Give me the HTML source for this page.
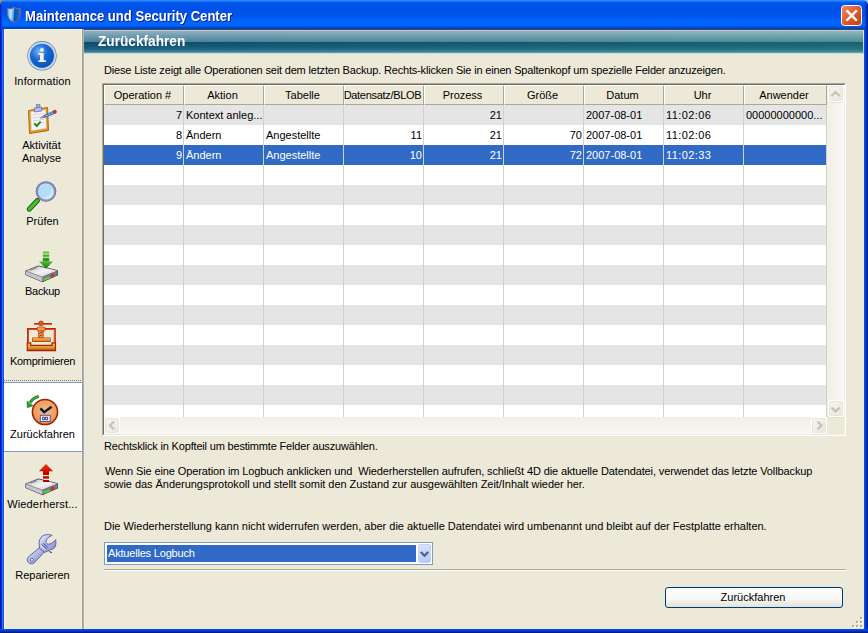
<!DOCTYPE html>
<html><head><meta charset="utf-8">
<style>
*{margin:0;padding:0;box-sizing:border-box}
html,body{width:868px;height:633px;overflow:hidden;background:linear-gradient(90deg,#a09070 50%,#a8bce8 50%)}
body{position:relative;font-family:"Liberation Sans",sans-serif;font-size:11px;color:#000}
.a{position:absolute}
.t{position:absolute;white-space:pre;line-height:13px;font-size:11px}
#title{left:0;top:0;width:868px;height:29px;border-radius:5px 5px 0 0;
 background:linear-gradient(180deg,#3d95ff 0px,#1f7dff 1px,#0a62f4 2px,#0055ea 3px,#0050e6 9px,#0054ea 15px,#0062fb 20px,#0066ff 24px,#0062fa 26px,#0050e0 27px,#0040c8 28px,#0040c8 29px)}
#frameL{left:0;top:29px;width:4px;height:604px;background:linear-gradient(90deg,#0014c4 0,#0014c4 1px,#0630dc 1px,#0630dc 2px,#2a74f4 2px,#2a74f4 3px,#0a52ea 3px,#0a52ea 4px)}
#frameR{left:864px;top:29px;width:4px;height:604px;background:linear-gradient(90deg,#0050f0 0,#0050f0 1px,#0040d8 1px,#0040d8 2px,#0030b0 2px,#0030b0 3px,#001880 3px)}
#frameB{left:0;top:629px;width:868px;height:4px;background:linear-gradient(180deg,#0848e8 0,#0848e8 1px,#0040e0 1px,#0040e0 2px,#0030b0 2px,#0030b0 3px,#001a80 3px)}
#content{left:4px;top:29px;width:860px;height:600px;background:#ece9d8}
#side{left:4px;top:29px;width:78px;height:600px;background:#ece9d8;border-top:1px solid #fff8e0;border-left:1px solid #fff8e0}
#sep{left:81px;top:29px;width:3px;height:600px;background:linear-gradient(90deg,#f4f0dc 0,#f4f0dc 1px,#a0a0a0 1px,#a0a0a0 2px,#b4b2a8 2px)}
#hdr{left:84px;top:29px;width:780px;height:25px;
 background:linear-gradient(180deg,#404850 0,#404850 1px,#c0c8cc 1px,#c0c8cc 2px,#8fb0c0 2px,#4a809c 13px,#0c4c6c 13px,#145674 17px,#206080 20px,#3a88a0 23px,#78b4c0 24px,#c0dcd8 24px,#c0dcd8 25px)}
#hdr2{left:84px;top:29px;width:780px;height:25px;-webkit-mask-image:linear-gradient(90deg,transparent,#000);
 background:linear-gradient(180deg,#404850 0,#404850 1px,#c0c8cc 1px,#c0c8cc 2px,#90b8c0 2px,#4c8c94 13px,#166270 13px,#1e6a78 17px,#2a7280 20px,#3c9098 23px,#78b8b8 24px,#c0e0d8 24px,#c0e0d8 25px)}
.hdrtxt{color:#fff;font-weight:bold;font-size:13px;}
.tb{left:25px;top:10px;color:#fff;font-weight:bold;font-size:14px;text-shadow:1px 1px 0 #0a1e88;transform:scaleX(0.934);transform-origin:0 0}
/* table */
#tbl{left:102px;top:83px;width:744px;height:353px;border:1px solid;border-color:#aca899 #fff #fff #aca899}
#tbli{left:103px;top:84px;width:742px;height:351px;border:1px solid;border-color:#716f64 #f1efe2 #f1efe2 #716f64;background:#fff}
.hc{position:absolute;top:85px;height:20px;background:#ece9d8;border-left:1px solid #fff;border-top:1px solid #fff;border-right:1px solid #aca899;border-bottom:1px solid #aca899}
.ht{position:absolute;top:89px;height:13px;line-height:13px;text-align:center;overflow:hidden;white-space:nowrap}
.row{position:absolute;left:104px;width:723px;height:20px}
.g{background:#e5e5e5}.w{background:#fff}
.s{background:#316ac5}
.vl{position:absolute;top:105px;width:1px;height:312px;background:#d0d0d0}
.ct{position:absolute;height:13px;line-height:13px;white-space:pre;overflow:hidden}
.r{text-align:right}
.sl{position:absolute;left:4px;width:77px;text-align:center;line-height:13px;height:13px;white-space:pre}
.sbo{position:absolute;width:16px;height:17px;background:#fff;border-radius:2px;box-shadow:0 1px 0 #e2e0d2}
.sbi{position:absolute;width:14px;height:15px;border-radius:2px;background:linear-gradient(135deg,#f6f5f0,#e9e7de);border:1px solid #e8e6dc}
.btn{position:absolute;border:1px solid #003c74;border-radius:3px;background:linear-gradient(180deg,#fff 0%,#f6f6f3 60%,#e3e2da 100%);text-align:center}
</style></head><body>
<div class="a" id="title"></div>
<div class="a" style="left:0;top:4px;width:1px;height:25px;background:#0020c8"></div>
<div class="a" style="left:1px;top:2px;width:1px;height:27px;background:linear-gradient(180deg,#1a5cf0,#0840dc 5px)"></div>
<div class="a" style="left:867px;top:4px;width:1px;height:25px;background:#001a80"></div>
<div class="a" style="left:866px;top:2px;width:1px;height:27px;background:linear-gradient(180deg,#1850d8,#0030b0 6px)"></div>
<div class="a" style="left:865px;top:2px;width:1px;height:27px;background:#0040d0"></div>
<div class="a" id="frameL"></div>
<div class="a" id="frameR"></div>
<div class="a" id="frameB"></div>
<div class="a" id="content"></div>
<div class="a" id="side"></div>
<div class="a" id="sep"></div>
<div class="a" id="hdr"></div><div class="a" id="hdr2"></div><div class="a" style="left:863px;top:30px;width:1px;height:24px;background:linear-gradient(180deg,#e0ecec,#a8ccc8)"></div>
<div class="a" style="left:4px;top:380px;width:78px;height:1px;background:repeating-linear-gradient(90deg,#7a7a70 0,#7a7a70 1px,transparent 1px,transparent 2px)"></div>
<div class="a" style="left:4px;top:382px;width:79px;height:70px;background:#fff;border:1px solid #7b9cc0;border-left:0;border-radius:0 2px 2px 0"></div>
<div class="sl" style="top:75px;letter-spacing:0.15px">Information</div>
<div class="sl" style="top:139px;left:3px">Aktivität</div>
<div class="sl" style="top:152px;left:3px">Analyse</div>
<div class="sl" style="top:215px">Prüfen</div>
<div class="sl" style="top:285px;letter-spacing:-0.3px">Backup</div>
<div class="sl" style="top:355px;letter-spacing:-0.27px">Komprimieren</div>
<div class="sl" style="top:428px">Zurückfahren</div>
<div class="sl" style="top:498px;letter-spacing:0.15px">Wiederherst...</div>
<div class="sl" style="top:569px">Reparieren</div>
<div class="t tb">Maintenance und Security Center</div>
<div class="t hdrtxt" style="left:97.5px;top:35px;font-size:14px;transform:scaleX(0.975);transform-origin:0 0">Zurückfahren</div>

<div class="t" style="left:104px;top:64px;letter-spacing:-0.175px">Diese Liste zeigt alle Operationen seit dem letzten Backup. Rechts-klicken Sie in einen Spaltenkopf um spezielle Felder anzuzeigen.</div>

<div class="a" id="tbl"></div><div class="a" id="tbli"></div>
<div class="hc" style="left:104px;width:80px"></div>
<div class="ht" style="left:104px;width:77px">Operation #</div>
<div class="hc" style="left:184px;width:80px"></div>
<div class="ht" style="left:184px;width:77px">Aktion</div>
<div class="hc" style="left:264px;width:80px"></div>
<div class="ht" style="left:264px;width:77px">Tabelle</div>
<div class="hc" style="left:344px;width:80px"></div>
<div class="ht" style="left:343px;width:79px;letter-spacing:-0.3px">Datensatz/BLOB</div>
<div class="hc" style="left:424px;width:80px"></div>
<div class="ht" style="left:424px;width:77px">Prozess</div>
<div class="hc" style="left:504px;width:80px"></div>
<div class="ht" style="left:504px;width:77px">Größe</div>
<div class="hc" style="left:584px;width:80px"></div>
<div class="ht" style="left:584px;width:77px">Datum</div>
<div class="hc" style="left:664px;width:80px"></div>
<div class="ht" style="left:664px;width:77px">Uhr</div>
<div class="hc" style="left:744px;width:83px"></div>
<div class="ht" style="left:744px;width:80px">Anwender</div>
<div class="row g" style="top:105px;height:20px"></div>
<div class="row w" style="top:125px;height:20px"></div>
<div class="row s" style="top:145px;height:20px"></div>
<div class="row w" style="top:165px;height:20px"></div>
<div class="row g" style="top:185px;height:20px"></div>
<div class="row w" style="top:205px;height:20px"></div>
<div class="row g" style="top:225px;height:20px"></div>
<div class="row w" style="top:245px;height:20px"></div>
<div class="row g" style="top:265px;height:20px"></div>
<div class="row w" style="top:285px;height:20px"></div>
<div class="row g" style="top:305px;height:20px"></div>
<div class="row w" style="top:325px;height:20px"></div>
<div class="row g" style="top:345px;height:20px"></div>
<div class="row w" style="top:365px;height:20px"></div>
<div class="row g" style="top:385px;height:20px"></div>
<div class="row w" style="top:405px;height:12px"></div>
<div class="vl" style="left:183px"></div>
<div class="vl" style="left:263px"></div>
<div class="vl" style="left:343px"></div>
<div class="vl" style="left:423px"></div>
<div class="vl" style="left:503px"></div>
<div class="vl" style="left:583px"></div>
<div class="vl" style="left:663px"></div>
<div class="vl" style="left:743px"></div>
<div class="vl" style="left:826px"></div>
<div class="ct r" style="left:104px;width:78px;top:109px">7</div>
<div class="ct" style="left:186px;width:77px;top:109px">Kontext anleg...</div>
<div class="ct r" style="left:424px;width:78px;top:109px">21</div>
<div class="ct" style="left:586px;width:77px;top:109px">2007-08-01</div>
<div class="ct" style="left:666px;width:77px;top:109px;letter-spacing:0.4px">11:02:06</div>
<div class="ct" style="left:746px;width:77px;top:109px">00000000000...</div>
<div class="ct r" style="left:104px;width:78px;top:129px">8</div>
<div class="ct" style="left:186px;width:77px;top:129px">Ändern</div>
<div class="ct" style="left:266px;width:77px;top:129px">Angestellte</div>
<div class="ct r" style="left:344px;width:78px;top:129px">11</div>
<div class="ct r" style="left:424px;width:78px;top:129px">21</div>
<div class="ct r" style="left:504px;width:78px;top:129px">70</div>
<div class="ct" style="left:586px;width:77px;top:129px">2007-08-01</div>
<div class="ct" style="left:666px;width:77px;top:129px;letter-spacing:0.4px">11:02:06</div>
<div class="ct r" style="left:104px;width:78px;top:149px;color:#fff">9</div>
<div class="ct" style="left:186px;width:77px;top:149px;color:#fff">Ändern</div>
<div class="ct" style="left:266px;width:77px;top:149px;color:#fff">Angestellte</div>
<div class="ct r" style="left:344px;width:78px;top:149px;color:#fff">10</div>
<div class="ct r" style="left:424px;width:78px;top:149px;color:#fff">21</div>
<div class="ct r" style="left:504px;width:78px;top:149px;color:#fff">72</div>
<div class="ct" style="left:586px;width:77px;top:149px;color:#fff">2007-08-01</div>
<div class="ct" style="left:666px;width:77px;top:149px;color:#fff;letter-spacing:0.4px">11:02:33</div>
<div class="a" style="left:827px;top:85px;width:17px;height:332px;background:linear-gradient(90deg,#f1efe7,#f5f4ee 70%,#fbfaf6)"></div>
<div class="a" style="left:104px;top:417px;width:723px;height:17px;background:linear-gradient(180deg,#f1efe7,#f5f4ee 70%,#fbfaf6)"></div>
<div class="a" style="left:827px;top:417px;width:17px;height:17px;background:#ece9d8"></div>
<div class="sbo" style="left:828px;top:85px"></div><div class="sbi" style="left:829px;top:86px"></div>
<div class="sbo" style="left:828px;top:400px"></div><div class="sbi" style="left:829px;top:401px"></div>
<div class="sbo" style="left:104px;top:417px"></div><div class="sbi" style="left:105px;top:418px"></div>
<div class="sbo" style="left:811px;top:417px"></div><div class="sbi" style="left:812px;top:418px"></div>
<svg class="a" style="left:0;top:0" width="868" height="633">
<path d="M831.5 96 L835.5 92 L839.5 96" fill="none" stroke="#c5c2b2" stroke-width="2.2"/>
<path d="M831.5 407.5 L835.5 411.5 L839.5 407.5" fill="none" stroke="#c5c2b2" stroke-width="2.2"/>
<path d="M114 421.5 L110 425.5 L114 429.5" fill="none" stroke="#c5c2b2" stroke-width="2.2"/>
<path d="M817.5 421.5 L821.5 425.5 L817.5 429.5" fill="none" stroke="#c5c2b2" stroke-width="2.2"/>
</svg>



<div class="t" style="left:104px;top:440px;letter-spacing:-0.18px">Rechtsklick in Kopfteil um bestimmte Felder auszuwählen.</div>
<div class="t" style="left:105px;top:465px;letter-spacing:-0.118px">Wenn Sie eine Operation im Logbuch anklicken und  Wiederherstellen aufrufen, schließt 4D die aktuelle Datendatei, verwendet das letzte Vollbackup</div>
<div class="t" style="left:104px;top:478px;letter-spacing:-0.041px">sowie das Änderungsprotokoll und stellt somit den Zustand zur ausgewählten Zeit/Inhalt wieder her.</div>
<div class="t" style="left:104px;top:520px;letter-spacing:-0.015px">Die Wiederherstellung kann nicht widerrufen werden, aber die aktuelle Datendatei wird umbenannt und bleibt auf der Festplatte erhalten.</div>

<div class="a" style="left:104px;top:542px;width:329px;height:23px;border:1px solid #7f9db9;background:#fff"></div>
<div class="a" style="left:107px;top:545px;width:309px;height:17px;background:#316ac5"></div>
<div class="t" style="left:108px;top:547px;color:#fff;letter-spacing:-0.19px">Aktuelles Logbuch</div>
<div class="a" style="left:418px;top:544px;width:13px;height:19px;border-radius:2px;background:linear-gradient(160deg,#dbe5fd 0%,#c6d5fb 50%,#b2c6f6 100%);border:1px solid #c3d3fb"></div>
<svg class="a" style="left:418px;top:544px" width="13" height="19"><path d="M2.8 8 L6.5 11.7 L10.2 8" fill="none" stroke="#4d6185" stroke-width="2.3"/></svg>

<div class="a" style="left:104px;top:569px;width:742px;height:1px;background:#aca899"></div>
<div class="a" style="left:104px;top:570px;width:742px;height:1px;background:#fff"></div>

<div class="btn" style="left:665px;top:587px;width:178px;height:21px;line-height:19px;padding-right:2px">Zurückfahren</div>
<div class="a" style="left:861px;top:618px;width:2px;height:2px;background:#fff"></div><div class="a" style="left:860px;top:617px;width:2px;height:2px;background:#b2ae9c"></div><div class="a" style="left:857px;top:622px;width:2px;height:2px;background:#fff"></div><div class="a" style="left:856px;top:621px;width:2px;height:2px;background:#b2ae9c"></div><div class="a" style="left:861px;top:622px;width:2px;height:2px;background:#fff"></div><div class="a" style="left:860px;top:621px;width:2px;height:2px;background:#b2ae9c"></div><div class="a" style="left:853px;top:626px;width:2px;height:2px;background:#fff"></div><div class="a" style="left:852px;top:625px;width:2px;height:2px;background:#b2ae9c"></div><div class="a" style="left:857px;top:626px;width:2px;height:2px;background:#fff"></div><div class="a" style="left:856px;top:625px;width:2px;height:2px;background:#b2ae9c"></div><div class="a" style="left:861px;top:626px;width:2px;height:2px;background:#fff"></div><div class="a" style="left:860px;top:625px;width:2px;height:2px;background:#b2ae9c"></div>
<svg class="a" style="left:0;top:0" width="868" height="633" viewBox="0 0 868 633">
<defs>
<radialGradient id="infoG" cx="0.38" cy="0.32" r="0.7">
 <stop offset="0" stop-color="#7ab8f8"/>
 <stop offset="0.5" stop-color="#1a68d4"/>
 <stop offset="1" stop-color="#0a52bc"/>
</radialGradient>
<linearGradient id="shieldL" x1="0" x2="1" y1="0.2" y2="0.3">
 <stop offset="0" stop-color="#6cc0f4"/><stop offset="0.28" stop-color="#b4ecff"/><stop offset="0.5" stop-color="#3c98ea"/><stop offset="0.56" stop-color="#0a4cb0"/><stop offset="0.8" stop-color="#1a5cc4"/><stop offset="1" stop-color="#2e72d4"/>
</linearGradient>
<linearGradient id="closeG" x1="0" y1="0" x2="1" y2="1">
 <stop offset="0" stop-color="#f08a68"/><stop offset="0.5" stop-color="#e05a30"/><stop offset="1" stop-color="#c43c10"/>
</linearGradient>
<linearGradient id="boardG" x1="0" y1="0" x2="1" y2="1">
 <stop offset="0" stop-color="#f0a838"/><stop offset="1" stop-color="#e08818"/>
</linearGradient>
<linearGradient id="glassG" x1="0" y1="0" x2="1" y2="1">
 <stop offset="0" stop-color="#d8f0ff"/><stop offset="0.5" stop-color="#b0dcf4"/><stop offset="1" stop-color="#f0faff"/>
</linearGradient>
<linearGradient id="diskTop" x1="0" y1="0" x2="1" y2="1">
 <stop offset="0" stop-color="#b8b8bc"/><stop offset="0.5" stop-color="#f4f4f4"/><stop offset="1" stop-color="#c8c8d4"/>
</linearGradient>
<linearGradient id="diskFront" x1="0" y1="0" x2="0" y2="1">
 <stop offset="0" stop-color="#a0a0a8"/><stop offset="1" stop-color="#505058"/>
</linearGradient>
<linearGradient id="greenArr" x1="0" y1="0" x2="0" y2="1">
 <stop offset="0" stop-color="#50c030"/><stop offset="1" stop-color="#107010"/>
</linearGradient>
<linearGradient id="redArr" x1="0" y1="0" x2="0" y2="1">
 <stop offset="0" stop-color="#ff3000"/><stop offset="1" stop-color="#b00000"/>
</linearGradient>
<linearGradient id="goldG" x1="0" y1="0" x2="0" y2="1">
 <stop offset="0" stop-color="#f8c850"/><stop offset="0.6" stop-color="#e09830"/><stop offset="1" stop-color="#a05010"/>
</linearGradient>
<linearGradient id="frameG" x1="0" y1="0" x2="1" y2="0">
 <stop offset="0" stop-color="#d03808"/><stop offset="0.5" stop-color="#f88020"/><stop offset="1" stop-color="#d03808"/>
</linearGradient>
<radialGradient id="clockG" cx="0.5" cy="0.45" r="0.55">
 <stop offset="0" stop-color="#f4c080"/><stop offset="0.7" stop-color="#eaa060"/><stop offset="1" stop-color="#d87830"/>
</radialGradient>
<linearGradient id="wrenchG" x1="0" y1="0" x2="1" y2="1">
 <stop offset="0" stop-color="#e4f0ff"/><stop offset="0.45" stop-color="#b4bce8"/><stop offset="1" stop-color="#7a80c0"/>
</linearGradient>
</defs>

<!-- title shield -->
<path d="M7.6 8.4 Q11 9.6 14 7.4 Q17 9.6 20.4 8.4 L20.2 14.5 Q19.8 19.8 14 22.6 Q8.2 19.8 7.8 14.5 Z" fill="url(#shieldL)" stroke="#7a6c84" stroke-width="1"/>
<!-- close button -->
<rect x="841.5" y="5.5" width="20" height="20" rx="3" fill="url(#closeG)" stroke="#fff" stroke-width="1"/>
<path d="M847.3 11.2 L856 19.9 M856 11.2 L847.3 19.9" stroke="#fff" stroke-width="2.4" stroke-linecap="square"/>

<!-- info -->
<circle cx="42" cy="55.8" r="14.7" fill="#6a82a8"/>
<circle cx="42" cy="55.8" r="13.9" fill="#d6e6f9"/>
<circle cx="42" cy="55.8" r="12.6" fill="#8ab4ec"/>
<circle cx="42" cy="55.8" r="11.9" fill="url(#infoG)"/>
<circle cx="41.9" cy="49.9" r="1.9" fill="#f5f0dc"/>
<path d="M38.4 53 H43.7 V60.2 H46 V62 H38.4 V60.2 H40 V54.8 H38.4 Z" fill="#f5f0dc"/>

<!-- clipboard -->
<path d="M28.5 110.5 L47.5 107.5 L48.5 130.5 L29.5 133.5 Z" fill="url(#boardG)" stroke="#b06a10" stroke-width="1"/>
<path d="M30.8 112 L45.5 109.8 L46.3 128.3 L31.6 130.6 Z" fill="#f6f6f6" stroke="#d8d8d8" stroke-width="0.5"/>
<path d="M32.5 115 L44 113.3 M32.7 118 L44 116.3 M32.9 121 L44.2 119.3 M33.1 124 L44.4 122.3" stroke="#c8c8d0" stroke-width="0.8"/>
<path d="M34.2 123.3 L36.8 126 L40.6 121.6" fill="none" stroke="#1a8a20" stroke-width="1.9"/>
<path d="M34.2 108 L41.5 107 L41.8 111 L34.5 112 Z" fill="#b8bce8" stroke="#6c70b0" stroke-width="0.8"/>
<rect x="36.3" y="104.6" width="3.6" height="3" fill="#a0a4d8" stroke="#6c70b0" stroke-width="0.6"/>
<path d="M40.5 118 L43.5 115.6 L53.5 111.3 L54.8 113.4 L45 117.5 Z" fill="#4a8ae0" stroke="#2a5098" stroke-width="0.6"/>
<path d="M46 115 L47 116.2 M49 113.8 L50 115 M52 112.5 L53 113.7" stroke="#e8f0ff" stroke-width="0.8"/>
<circle cx="54.8" cy="111.8" r="1.7" fill="#e02828" stroke="#a01010" stroke-width="0.4"/>
<path d="M40.5 118 L43 115.6 L44.2 117.1 Z" fill="#d8a060"/>

<!-- magnifier -->
<path d="M29.2 209.2 L37.5 200.5" stroke="#1c6010" stroke-width="5" stroke-linecap="round"/>
<path d="M29.2 209.2 L37.5 200.5" stroke="#48c030" stroke-width="3" stroke-linecap="round"/>
<circle cx="46" cy="191.5" r="10.3" fill="#6a6898"/><circle cx="46" cy="191.5" r="8.9" fill="url(#glassG)" stroke="#8c8ac0" stroke-width="1.8"/>
<circle cx="45" cy="190" r="6.2" fill="#b4dcf4"/>

<!-- backup disk -->
<g><path d="M26 271 L38.4 266.2 L57.3 270.8 L57.5 275 L42.4 281.7 L26 274.7 Z" fill="#9c9ca4" stroke="#34343c" stroke-width="1.1"/>
<path d="M26 271 L38.4 266.2 L57.3 270.8 L42.4 277 Z" fill="url(#diskTop)"/>
<path d="M26 271 L42.4 277 L42.4 281.7 L26 274.7 Z" fill="#c4c4ca"/>
<path d="M42.4 277 L57.3 270.8 L57.5 275 L42.4 281.7 Z" fill="#7a7a88"/>
<path d="M26 271 L42.4 277 L57.3 270.8" fill="none" stroke="#6a6a72" stroke-width="0.6"/>
<path d="M30 270.2 L37 267.6" stroke="#8a8a92" stroke-width="1.3"/>
<path d="M44 279.6 L49.5 277.3" stroke="#48e028" stroke-width="1.9"/>
<circle cx="52.6" cy="275.5" r="1.6" fill="#e03818" stroke="#a01808" stroke-width="0.4"/>
</g>
<rect x="42.8" y="251.5" width="6.4" height="2" fill="#58c838"/>
<rect x="42.8" y="254.5" width="6.4" height="2.3" fill="#40b020"/>
<rect x="42.8" y="257.8" width="6.4" height="4" fill="#2c9a18"/>
<path d="M39 261.5 L53 261.5 L46 268.8 Z" fill="url(#greenArr)"/>

<!-- press -->
<path d="M28 343 V329 H54.8 V343" fill="none" stroke="#b82000" stroke-width="2"/>
<path d="M28.2 343 V329.3 H54.6 V343" fill="none" stroke="#f07a20" stroke-width="0.7"/>
<rect x="34.2" y="323" width="17.7" height="2" fill="#c42400"/>
<rect x="34.2" y="324.3" width="17.7" height="0.7" fill="#f08840"/>
<circle cx="41" cy="323.4" r="2.4" fill="#d05a38" stroke="#b02800" stroke-width="0.6"/>
<rect x="37.2" y="327" width="7.8" height="4" rx="0.8" fill="#f2a058" stroke="#c03000" stroke-width="0.7"/>
<rect x="38.7" y="331" width="4.5" height="6.8" fill="#f0a048" stroke="#b83000" stroke-width="0.6"/>
<path d="M38.8 333.6 L43.1 331.8 M38.8 336.3 L43.1 334.5" stroke="#b83000" stroke-width="1"/>
<rect x="32.3" y="337.9" width="18" height="3.8" fill="url(#goldG)" stroke="#a82800" stroke-width="0.6"/>
<path d="M27.3 342.8 H30.7 V345.3 H52 V342.8 H55.5 V350.6 H27.3 Z" fill="url(#goldG)" stroke="#a82000" stroke-width="1.2"/>
<!-- clock -->
<path d="M38.6 396.4 Q33 398 30 402.6" fill="none" stroke="#1a7a1a" stroke-width="3"/>
<path d="M38.6 396.4 Q33 398 30 402.6" fill="none" stroke="#34a834" stroke-width="1.8"/>
<path d="M27 401.2 L27.2 407.8 L33.2 405.8 Z" fill="#2a9a2a" stroke="#1a6a1a" stroke-width="0.5"/>
<circle cx="45" cy="412" r="12.6" fill="url(#clockG)" stroke="#a02008" stroke-width="1.5"/>
<circle cx="45" cy="412" r="10.6" fill="none" stroke="#f0b070" stroke-width="0.8" opacity="0.7"/>
<path d="M40.4 408.4 L44.2 412.2 L51.6 406.8" fill="none" stroke="#18183a" stroke-width="2.5"/>
<rect x="40.3" y="415.3" width="9.8" height="6.2" fill="#f4f4fc" stroke="#4048b8" stroke-width="0.9"/>
<path d="M42.6 417.2 h2 v2.6 h-2 z M45.6 417.2 h2 v2.6 h-2 z" fill="none" stroke="#303060" stroke-width="0.9"/>

<!-- restore disk -->
<g transform="translate(0,213)"><path d="M26 271 L38.4 266.2 L57.3 270.8 L57.5 275 L42.4 281.7 L26 274.7 Z" fill="#9c9ca4" stroke="#34343c" stroke-width="1.1"/>
<path d="M26 271 L38.4 266.2 L57.3 270.8 L42.4 277 Z" fill="url(#diskTop)"/>
<path d="M26 271 L42.4 277 L42.4 281.7 L26 274.7 Z" fill="#c4c4ca"/>
<path d="M42.4 277 L57.3 270.8 L57.5 275 L42.4 281.7 Z" fill="#7a7a88"/>
<path d="M26 271 L42.4 277 L57.3 270.8" fill="none" stroke="#6a6a72" stroke-width="0.6"/>
<path d="M30 270.2 L37 267.6" stroke="#8a8a92" stroke-width="1.3"/>
<path d="M44 279.6 L49.5 277.3" stroke="#48e028" stroke-width="1.9"/>
<circle cx="52.6" cy="275.5" r="1.6" fill="#e03818" stroke="#a01808" stroke-width="0.4"/>
</g>
<path d="M46 464 L53 471.2 H49 V475 H43 V471.2 H39 Z" fill="url(#redArr)"/>
<rect x="43" y="476.2" width="6" height="2.4" fill="#c40000"/>
<rect x="43" y="480" width="6" height="2" fill="#b40000"/>

<!-- wrench -->
<path d="M39.4 547.6 L28.3 557 Q26.6 559 27.6 561.6 Q29.2 564.4 32.4 563.8 Q33.4 563.6 34.2 563 L44.2 552.2 Z" fill="url(#wrenchG)" stroke="#5a5e98" stroke-width="0.9"/>
<circle cx="32" cy="559.9" r="1.5" fill="#ffffff" stroke="#4a4e88" stroke-width="0.8"/>
<path d="M39.6 548.5 Q38.6 543 39.6 539.8 Q41.2 535.6 45 534.8 Q48.5 534 52.2 535.2 L47.6 538 Q45.6 540 46 542.4 Q46.6 544.2 48 544.4 L51.5 543.4 L55.8 539.8 Q56.4 544.5 55 547.2 Q53.6 549.4 50 549.8 L44.8 552.4 Z" fill="url(#wrenchG)" stroke="#5a5e98" stroke-width="0.9"/>
<path d="M41.8 544.5 L46.6 549 M43.4 543.2 L47.8 547.6" stroke="#2e3274" stroke-width="0.9"/>
<path d="M41 546 L45.4 550" stroke="#f0f4ff" stroke-width="0.7"/>
<path d="M47.6 550 L52.6 552.6 L50.8 553.3 Z" fill="#4a4e88"/>
</svg>

</body></html>
